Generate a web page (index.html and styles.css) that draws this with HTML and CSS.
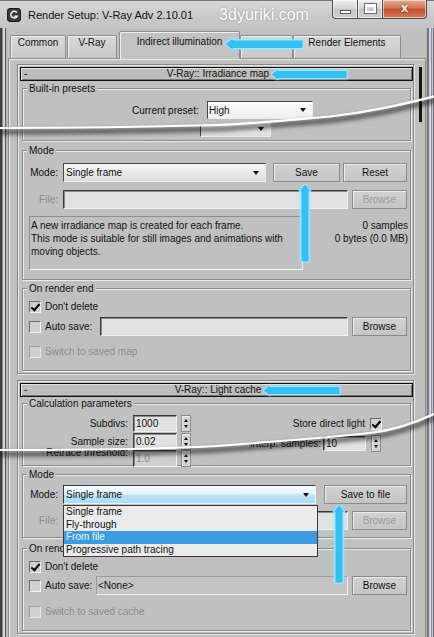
FILE: index.html
```html
<!DOCTYPE html>
<html lang="en">
<head>
    <meta charset="UTF-8">
    <meta name="viewport" content="width=device-width, initial-scale=1.0">
    <title>Render Setup: V-Ray Adv 2.10.01</title>
    <link rel="stylesheet" href="styles.css">
</head>
<body>
    <header class="titlebar">
        <svg class="app-icon" width="14" height="14" viewBox="0 0 14 14">
            <rect x="0.5" y="0.5" width="13" height="13" rx="2.5" fill="#3a3a3a" stroke="#1c1c1c"/>
            <path d="M9.8 4.4 A3.4 3.4 0 1 0 10.3 8.2 L7.2 8.2" fill="none" stroke="#f2f2f2" stroke-width="1.5"/>
        </svg>
        <span class="title">Render Setup: V-Ray Adv 2.10.01</span>
        <span class="watermark">3dyuriki.com</span>
        <div class="caption">
            <span class="cap-btn cap-min"><i></i></span>
            <span class="cap-btn cap-max"><i></i></span>
            <span class="cap-btn cap-close">x</span>
        </div>
    </header>

    <div class="client">
        <div class="edge edge-l"></div>
        <div class="dialog">
            <nav class="tabs">
                <span class="tab tab-common">Common</span>
                <span class="tab tab-vray">V-Ray</span>
                <span class="tab tab-gi active">Indirect illumination</span>
                <span class="tab tab-settings"></span>
                <span class="tab tab-elements">Render Elements</span>
            </nav>

            <div class="tabpage">
                <div class="rollouts">

                    <!-- irradiance map rollout -->
                    <section class="rollout">
                        <div class="rollout-head"><span>-</span><span class="rollout-name">V-Ray:: Irradiance map</span></div>

                        <div class="group g-presets">
                            <div class="group-title">Built-in presets</div>
                            <div class="row row-preset">
                                <span class="lbl-preset">Current preset:</span>
                                <span class="combo combo-preset">High<i class="drop"></i></span>
                            </div>
                            <div class="row row-basic">
                                <span class="combo combo-basic"><i class="drop"></i></span>
                            </div>
                        </div>

                        <div class="group g-mode">
                            <div class="group-title">Mode</div>
                            <div class="row row-mode">
                                <span class="lbl-mode">Mode:</span>
                                <span class="combo combo-mode">Single frame<i class="drop"></i></span>
                                <span class="btn btn-save">Save</span>
                                <span class="btn btn-reset">Reset</span>
                            </div>
                            <div class="row row-file">
                                <span class="lbl-mode off">File:</span>
                                <span class="field field-file"></span>
                                <span class="btn btn-browse off">Browse</span>
                            </div>
                            <div class="row row-desc">
                                <p class="desc">A new irradiance map is created for each frame.<br>This mode is suitable for still images and animations with moving objects.</p>
                                <p class="stats">0 samples<br>0 bytes (0.0 MB)</p>
                            </div>
                        </div>

                        <div class="group g-end">
                            <div class="group-title">On render end</div>
                            <div class="row row-dont"><span class="check on"></span>Don't delete</div>
                            <div class="row row-auto">
                                <span class="check"></span><span class="lbl-auto">Auto save:</span>
                                <span class="field field-auto"></span>
                                <span class="btn btn-browse">Browse</span>
                            </div>
                            <div class="row row-switch off"><span class="check"></span>Switch to saved map</div>
                        </div>
                    </section>

                    <!-- light cache rollout -->
                    <section class="rollout">
                        <div class="rollout-head"><span>-</span><span class="rollout-name">V-Ray:: Light cache</span></div>

                        <div class="group g-calc">
                            <div class="group-title">Calculation parameters</div>
                            <div class="row row-calc first">
                                <span class="calc-lbl">Subdivs:</span>
                                <span class="field num">1000</span>
                                <span class="spin"></span>
                                <span class="calc-side">Store direct light<span class="check on side-check"></span></span>
                            </div>
                            <div class="row row-calc">
                                <span class="calc-lbl">Sample size:</span>
                                <span class="field num">0.02</span>
                                <span class="spin"></span>
                                <span class="calc-side lower">Interp. samples:<span class="field num num-s">10</span><span class="spin spin-s"></span></span>
                            </div>
                            <div class="row row-calc last">
                                <span class="calc-lbl retrace-lbl">Retrace threshold:</span>
                                <span class="field num off">1.0</span>
                                <span class="spin"></span>
                            </div>
                        </div>

                        <div class="group g-mode2">
                            <div class="group-title">Mode</div>
                            <div class="row row-mode2">
                                <span class="lbl-mode">Mode:</span>
                                <span class="combo combo-lc focus">Single frame<i class="drop"></i>
                                    <span class="combo-list">
                                        <span class="opt">Single frame</span>
                                        <span class="opt">Fly-through</span>
                                        <span class="opt sel">From file</span>
                                        <span class="opt">Progressive path tracing</span>
                                    </span>
                                </span>
                                <span class="btn btn-savefile">Save to file</span>
                            </div>
                            <div class="row row-file2">
                                <span class="lbl-mode off">File:</span>
                                <span class="field field-file"></span>
                                <span class="btn btn-browse off">Browse</span>
                            </div>
                        </div>

                        <div class="group g-end2">
                            <div class="group-title">On render end</div>
                            <div class="row row-dont2"><span class="check on"></span>Don't delete</div>
                            <div class="row row-auto2">
                                <span class="check"></span><span class="lbl-auto2">Auto save:</span>
                                <span class="field field-none">&lt;None&gt;</span>
                                <span class="btn btn-browse">Browse</span>
                            </div>
                            <div class="row row-switch2 off"><span class="check"></span>Switch to saved cache</div>
                        </div>
                    </section>
                </div>
                <div class="scroll"><div class="thumb"></div></div>
            </div>
        </div>
        <div class="edge edge-r"></div>
    </div>

    <!-- torn-paper seams -->
    <svg class="tears" width="434" height="637" viewBox="0 0 434 637">
        <defs>
            <filter id="seam-blur" x="-5%" y="-100%" width="110%" height="300%">
                <feGaussianBlur stdDeviation="2.2"/>
            </filter>
        </defs>
        <polygon class="seam-fill" points="195,119 282,119 282,120.4 264,122 240,124 217,125 195,126.3"/>
        <path class="seam-shadow" transform="translate(0 4)" d="M0,128 C100,128 180,126 217,125 C260,123 300,119 330,116.5 C370,112 400,105 436,96"/>
        <path class="seam-line" d="M0,128 C100,128 180,126 217,125 C260,123 300,119 330,116.5 C370,112 400,105 436,96"/>

        <polygon class="seam-fill" points="196,431 321,427 321,437.5 300,439.3 260,442.5 217,446 196,447.5"/>
        <polygon class="seam-fill" points="70,446 131,446 131,449.3 70,449.8"/>
        <path class="seam-shadow" transform="translate(0 4)" d="M0,450 C100,450 180,448 217,446 C270,442 330,437 370,433 C395,430 415,423 436,413"/>
        <path class="seam-line" d="M0,450 C100,450 180,448 217,446 C270,442 330,437 370,433 C395,430 415,423 436,413"/>
    </svg>

    <!-- blue pointers -->
    <svg class="pointer p-tab" width="80" height="14" viewBox="0 0 80 14"><path d="M1,7 L9,1 L9,3 L79,3 L79,11.5 L9,11.5 L9,13.5 Z"/></svg>
    <svg class="pointer p-irr" width="78" height="13" viewBox="0 0 78 13"><path d="M1,6.5 L8,1 L8,2.5 L77,2.5 L77,10.5 L8,10.5 L8,12 Z"/></svg>
    <svg class="pointer p-save" width="14" height="80" viewBox="0 0 14 80"><path d="M7,1 L13,8 L11,8 L11,79 L3,79 L3,8 L1,8 Z"/></svg>
    <svg class="pointer p-lc" width="79" height="13" viewBox="0 0 79 13"><path d="M1,6.5 L8,1 L8,2.5 L78,2.5 L78,10.5 L8,10.5 L8,12 Z"/></svg>
    <svg class="pointer p-savefile" width="14" height="80" viewBox="0 0 14 80"><path d="M7,1 L13,8 L11,8 L11,79 L3,79 L3,8 L1,8 Z"/></svg>
</body>
</html>
```

FILE: styles.css
```css
* {
    box-sizing: border-box;
}
body {
    margin: 0;
    width: 434px;
    height: 637px;
    overflow: hidden;
    position: relative;
    display: flex;
    flex-direction: column;
    background-color: #c0c0c0;
    color: #111;
    font-family: "Liberation Sans", Arial, sans-serif;
    font-size: 10px;
}
p {
    margin: 0;
}

/* caption bar */
.titlebar {
    flex: none;
    height: 28px;
    display: flex;
    align-items: center;
    padding: 0 7px 0 7px;
    background: linear-gradient(#d7d7d7, #cacaca 55%, #c4c4c4);
    border-top: 1px solid #777;
}
.app-icon {
    flex: none;
}
.title {
    margin-left: 7px;
    font-size: 11px;
    color: #111;
}
.watermark {
    margin-left: 26px;
    font-size: 16px;
    color: #fff;
    text-shadow: 0 0 2px rgba(0, 0, 0, 0.35);
}
.caption {
    margin-left: auto;
    align-self: flex-start;
    margin-top: -1px;
    display: flex;
    height: 19px;
}
.cap-btn {
    height: 19px;
    border: 1px solid #4f4f4f;
    border-top: none;
    background: linear-gradient(#eeeeee, #d6d6d6 45%, #c5c5c5 52%, #d0d0d0);
    box-shadow: inset 0 0 0 1px rgba(255, 255, 255, 0.55);
}
.cap-min {
    width: 26px;
    border-radius: 0 0 0 4px;
}
.cap-min i {
    display: block;
    width: 11px;
    height: 4px;
    margin: 10px auto 0;
    background: #fff;
    border: 1px solid #5a5a5a;
}
.cap-max {
    width: 25px;
    border-left: none;
}
.cap-max i {
    display: block;
    width: 11px;
    height: 9px;
    margin: 4px auto 0;
    border: 2px solid #fff;
    border-top-width: 3px;
    outline: 1px solid #6a6a6a;
}
.cap-close {
    width: 44px;
    border-left: none;
    border-radius: 0 0 4px 0;
    background: linear-gradient(#e6ab94, #d27555 45%, #c24b2c 52%, #d4805f);
    color: #fff;
    font-weight: bold;
    font-size: 13px;
    line-height: 16px;
    text-align: center;
    text-shadow: 0 0 2px #5a1c0c;
}

/* window body */
.client {
    flex: 1;
    display: flex;
    min-height: 0;
}
.edge {
    flex: none;
    width: 8px;
}
.edge-l {
    background: linear-gradient(to right, #3c3c3c 0 2px, #8c8c8c 2px 3px, #d2d2d2 3px 5px, #575757 5px 6px, #b9b9b9 6px 8px);
}
.edge-r {
    background: linear-gradient(to right, #b2b2b2 0 1px, #77758a 1px 3px, #d4d2dc 3px 5px, #8d8b9c 5px 6px, #c6c4ce 6px 7px, #6c6a78 7px 8px);
}
.dialog {
    flex: 1;
    display: flex;
    flex-direction: column;
    min-width: 0;
}

/* tabs */
.tabs {
    flex: none;
    height: 30px;
    display: flex;
    align-items: flex-end;
    padding-left: 2px;
}
.tab {
    height: 23px;
    line-height: 14px;
    text-align: center;
    border: 1px solid #8c8c8c;
    border-bottom: none;
    border-radius: 2px 2px 0 0;
    background: linear-gradient(#d9d9d9, #c7c7c7);
    box-shadow: inset 1px 1px 0 #efefef;
}
.tab-common {
    width: 56px;
    margin-right: 1px;
}
.tab-vray {
    width: 50px;
    margin-right: 2px;
}
.tab.active {
    width: 121px;
    height: 28px;
    margin-bottom: -1px;
    padding-top: 3px;
    position: relative;
    background: #c2c2c2;
}
.tab-settings {
    width: 53px;
}
.tab-elements {
    width: 108px;
}
.tabpage {
    flex: 1;
    display: flex;
    min-height: 0;
    border: 1px solid #8c8c8c;
    border-bottom: none;
    box-shadow: inset 1px 1px 0 #e8e8e8;
    padding: 5px 0 0 8px;
}
.rollouts {
    flex: none;
    width: 397px;
    display: flex;
    flex-direction: column;
    gap: 6px;
}
.scroll {
    flex: none;
    width: 11px;
    padding: 3px 3px 0 5px;
}
.thumb {
    width: 3px;
    height: 55px;
    background: #141414;
}

/* rollouts and group boxes */
.rollout {
    border: 1px solid #8a8a8a;
    box-shadow: inset 1px 1px 0 #e6e6e6, 1px 1px 0 #e6e6e6;
    padding: 2px 2px 2px 4px;
}
.rollout-head {
    height: 14px;
    margin: 0 -2px;
    display: grid;
    grid-template-columns: 12px 1fr 12px;
    align-items: center;
    padding-left: 3px;
    line-height: 12px;
    border: 1px solid #0e0e0e;
    background: #bdbdbd;
    box-shadow: inset 1px 1px 0 #e0e0e0, inset -1px -1px 0 #777;
}
.rollout-name {
    text-align: center;
}
.group {
    border: 1px solid #8a8a8a;
    box-shadow: inset 1px 1px 0 #ececec, 1px 1px 0 #ececec;
    padding: 0 2px 0 6px;
}
.group-title {
    width: fit-content;
    margin: -6px 0 0 -2px;
    padding: 0 2px;
    line-height: 11px;
    background: #c0c0c0;
}
.row {
    display: flex;
    align-items: center;
}
.off {
    color: #8c8c8c;
}

/* controls */
.combo {
    position: relative;
    height: 19px;
    display: flex;
    align-items: center;
    padding-left: 2px;
    border: 1px solid;
    border-color: #474747 #ececec #ececec #474747;
    background: linear-gradient(#f7f7f7, #e9e9e9 50%, #dcdcdc);
}
.drop {
    margin-left: auto;
    margin-right: 6px;
    width: 0;
    height: 0;
    border-left: 3.5px solid transparent;
    border-right: 3.5px solid transparent;
    border-top: 4px solid #111;
}
.btn {
    height: 19px;
    display: flex;
    align-items: center;
    justify-content: center;
    border: 1px solid #8b8b8b;
    background: linear-gradient(#d1d1d1, #c5c5c5);
    box-shadow: inset 1px 1px 0 #ebebeb;
}
.btn.off {
    color: #9a9a9a;
}
.field {
    height: 19px;
    display: flex;
    align-items: center;
    padding-left: 2px;
    border: 1px solid;
    border-color: #3a3a3a #f0f0f0 #f0f0f0 #3a3a3a;
    background: #e1e1e1;
    box-shadow: inset 1px 1px 0 #8a8a8a;
}
.check {
    flex: none;
    width: 12px;
    height: 12px;
    margin-right: 4px;
    border: 1px solid;
    border-color: #6a6a6a #f2f2f2 #f2f2f2 #6a6a6a;
    background: #d0d0d0;
}
.check.on::after {
    content: "";
    display: block;
    width: 3px;
    height: 7px;
    margin: 0 0 0 3px;
    border: solid #000;
    border-width: 0 2px 2px 0;
    transform: rotate(40deg);
}
.off .check {
    border-color: #a0a0a0 #e6e6e6 #e6e6e6 #a0a0a0;
}
.spin {
    flex: none;
    width: 10px;
    height: 17px;
    margin-left: 4px;
    border: 1px solid #8a8a8a;
    background: #d3d3d3;
    box-shadow: inset 1px 1px 0 #f0f0f0;
}
.spin::before,
.spin::after {
    content: "";
    display: block;
    width: 0;
    height: 0;
    margin: 3px auto 0;
    border-left: 2.5px solid transparent;
    border-right: 2.5px solid transparent;
}
.spin::before {
    border-bottom: 3px solid #111;
}
.spin::after {
    margin-top: 3px;
    border-top: 3px solid #111;
}

/* irradiance map */
.g-presets {
    margin-top: 7px;
    padding-bottom: 3px;
}
.row-preset {
    margin-top: 7px;
    height: 18px;
    padding-left: 103px;
}
.lbl-preset {
    width: 75px;
}
.combo-preset {
    width: 106px;
    height: 18px;
    padding-left: 1px;
    background: linear-gradient(#fbfbfb, #efefef);
}
.row-basic {
    margin-top: 1px;
    height: 17px;
    padding-left: 171px;
}
.combo-basic {
    width: 71px;
    height: 17px;
}
.g-mode {
    margin-top: 9px;
    padding-bottom: 9px;
}
.row-mode {
    margin-top: 7px;
    height: 19px;
}
.lbl-mode {
    width: 34px;
    text-align: right;
    padding-right: 5px;
}
.combo-mode {
    width: 203px;
}
.btn-save {
    width: 67px;
    margin-left: 7px;
}
.btn-reset {
    width: 64px;
    margin-left: 3px;
}
.row-file {
    margin-top: 8px;
    height: 19px;
}
.field-file {
    width: 285px;
}
.btn-browse {
    width: 55px;
    margin-left: 4px;
}
.row-desc {
    margin-top: 7px;
    height: 54px;
    align-items: stretch;
}
.desc {
    width: 274px;
    padding: 2px 1px;
    line-height: 13px;
    border: 1px solid;
    border-color: #8e8e8e #f6f6f6 #f6f6f6 #8e8e8e;
}
.stats {
    flex: 1;
    padding-top: 3px;
    line-height: 13px;
    text-align: right;
}
.g-end {
    margin-top: 8px;
    padding-bottom: 12px;
}
.row-dont {
    margin-top: 6px;
    height: 13px;
}
.row-auto {
    margin-top: 4px;
    height: 19px;
}
.lbl-auto {
    width: 55px;
}
.field-auto {
    width: 248px;
}
.row-switch {
    margin-top: 9px;
    height: 13px;
}

/* light cache */
.g-calc {
    margin-top: 6px;
    padding-bottom: 2px;
}
.row-calc {
    height: 18px;
}
.row-calc.first {
    margin-top: 5px;
}
.row-calc.last {
    height: 13px;
    align-items: flex-start;
}
.calc-lbl {
    width: 104px;
    padding-right: 5px;
    text-align: right;
}
.retrace-lbl {
    margin-top: -3px;
}
.num {
    width: 44px;
    height: 17px;
}
.num.off {
    background: #cfcfcf;
}
.calc-side {
    margin-left: auto;
    margin-right: 26px;
    display: flex;
    align-items: center;
}
.side-check {
    margin: 1px 0 0 5px;
}
.calc-side.lower {
    margin-top: 5px;
    margin-right: 27px;
}
.num-s {
    width: 43px;
    height: 15px;
    margin-left: 2px;
}
.spin-s {
    margin-left: 5px;
}
.g-mode2 {
    margin-top: 8px;
    padding-bottom: 7px;
}
.row-mode2 {
    margin-top: 5px;
    height: 19px;
}
.combo-lc {
    width: 253px;
}
.combo.focus {
    border-color: #2b3d4e #e6f4fb #e6f4fb #2b3d4e;
    background: linear-gradient(#f4fbff, #e6f5fd 45%, #b9e3f7 55%, #acdcf4);
}
.combo-list {
    position: absolute;
    left: -1px;
    top: 19px;
    width: 255px;
    z-index: 2;
    display: flex;
    flex-direction: column;
    background: #ebebeb;
    border: 1px solid #3a3a3a;
}
.opt {
    height: 12.5px;
    line-height: 12.5px;
    padding-left: 2px;
}
.opt.sel {
    background: #3d9be4;
    color: #e9f7ff;
}
.btn-savefile {
    width: 83px;
    margin-left: 8px;
}
.row-file2 {
    margin-top: 7px;
    height: 19px;
}
.g-end2 {
    margin-top: 10px;
    padding-bottom: 12px;
}
.row-dont2 {
    margin-top: 6px;
    height: 13px;
}
.row-auto2 {
    margin-top: 3px;
    height: 19px;
}
.lbl-auto2 {
    width: 51px;
}
.field-none {
    width: 252px;
    padding-left: 1px;
    border-color: #9a9a9a #f4f4f4 #f4f4f4 #9a9a9a;
    background: #c4c4c4;
    box-shadow: none;
}
.row-switch2 {
    margin-top: 10px;
    height: 13px;
}

/* seams laid over the panel */
.tears {
    position: absolute;
    left: 0;
    top: 0;
    z-index: 5;
    pointer-events: none;
}
.seam-fill {
    fill: #c0c0c0;
}
.seam-shadow {
    fill: none;
    stroke: rgba(0, 0, 0, 0.55);
    stroke-width: 5;
    filter: url(#seam-blur);
}
.seam-line {
    fill: none;
    stroke: #fff;
    stroke-width: 2.2;
}

/* blue pointers */
.pointer {
    position: absolute;
    z-index: 6;
    filter: drop-shadow(0 0 1.5px rgba(150, 230, 255, 0.95));
}
.pointer path {
    fill: #33c1f1;
    stroke: #9fe7ff;
    stroke-width: 1;
}
.p-tab {
    left: 224px;
    top: 37px;
}
.p-irr {
    left: 270px;
    top: 68px;
}
.p-save {
    left: 298px;
    top: 183px;
}
.p-lc {
    left: 262px;
    top: 384px;
}
.p-savefile {
    left: 332px;
    top: 504px;
}
```
